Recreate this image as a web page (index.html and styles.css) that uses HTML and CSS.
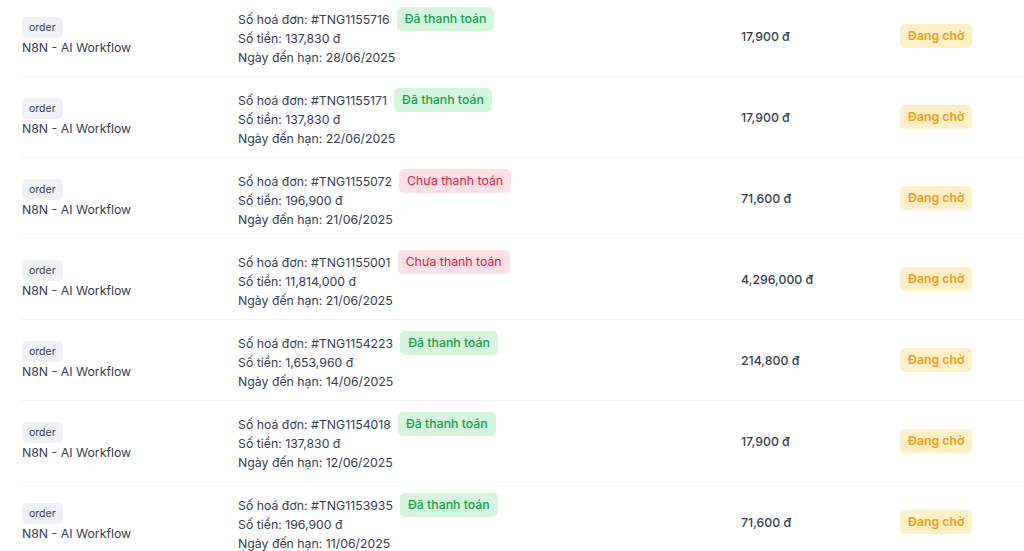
FILE: index.html
```html
<!DOCTYPE html>
<html lang="vi">
<head>
<meta charset="utf-8">
<title>Hoá đơn</title>
<link rel="stylesheet" href="styles.css">
</head>
<body>
<div class="table">
  <div class="row">
    <div class="cell product"><span class="tag">order</span><span class="name">N8N - AI Workflow</span></div>
    <div class="cell invoice">
      <div class="inv-head"><span>Số hoá đơn: #TNG1155716</span><span class="badge paid">Đã thanh toán</span></div>
      <div class="line">Số tiền: 137,830 đ</div>
      <div class="line">Ngày đến hạn: 28/06/2025</div>
    </div>
    <div class="cell amount">17,900 đ</div>
    <div class="cell status"><span class="badge pending">Đang chờ</span></div>
  </div>
  <div class="row">
    <div class="cell product"><span class="tag">order</span><span class="name">N8N - AI Workflow</span></div>
    <div class="cell invoice">
      <div class="inv-head"><span>Số hoá đơn: #TNG1155171</span><span class="badge paid">Đã thanh toán</span></div>
      <div class="line">Số tiền: 137,830 đ</div>
      <div class="line">Ngày đến hạn: 22/06/2025</div>
    </div>
    <div class="cell amount">17,900 đ</div>
    <div class="cell status"><span class="badge pending">Đang chờ</span></div>
  </div>
  <div class="row">
    <div class="cell product"><span class="tag">order</span><span class="name">N8N - AI Workflow</span></div>
    <div class="cell invoice">
      <div class="inv-head"><span>Số hoá đơn: #TNG1155072</span><span class="badge unpaid">Chưa thanh toán</span></div>
      <div class="line">Số tiền: 196,900 đ</div>
      <div class="line">Ngày đến hạn: 21/06/2025</div>
    </div>
    <div class="cell amount">71,600 đ</div>
    <div class="cell status"><span class="badge pending">Đang chờ</span></div>
  </div>
  <div class="row">
    <div class="cell product"><span class="tag">order</span><span class="name">N8N - AI Workflow</span></div>
    <div class="cell invoice">
      <div class="inv-head"><span>Số hoá đơn: #TNG1155001</span><span class="badge unpaid">Chưa thanh toán</span></div>
      <div class="line">Số tiền: 11,814,000 đ</div>
      <div class="line">Ngày đến hạn: 21/06/2025</div>
    </div>
    <div class="cell amount">4,296,000 đ</div>
    <div class="cell status"><span class="badge pending">Đang chờ</span></div>
  </div>
  <div class="row">
    <div class="cell product"><span class="tag">order</span><span class="name">N8N - AI Workflow</span></div>
    <div class="cell invoice">
      <div class="inv-head"><span>Số hoá đơn: #TNG1154223</span><span class="badge paid">Đã thanh toán</span></div>
      <div class="line">Số tiền: 1,653,960 đ</div>
      <div class="line">Ngày đến hạn: 14/06/2025</div>
    </div>
    <div class="cell amount">214,800 đ</div>
    <div class="cell status"><span class="badge pending">Đang chờ</span></div>
  </div>
  <div class="row">
    <div class="cell product"><span class="tag">order</span><span class="name">N8N - AI Workflow</span></div>
    <div class="cell invoice">
      <div class="inv-head"><span>Số hoá đơn: #TNG1154018</span><span class="badge paid">Đã thanh toán</span></div>
      <div class="line">Số tiền: 137,830 đ</div>
      <div class="line">Ngày đến hạn: 12/06/2025</div>
    </div>
    <div class="cell amount">17,900 đ</div>
    <div class="cell status"><span class="badge pending">Đang chờ</span></div>
  </div>
  <div class="row">
    <div class="cell product"><span class="tag">order</span><span class="name">N8N - AI Workflow</span></div>
    <div class="cell invoice">
      <div class="inv-head"><span>Số hoá đơn: #TNG1153935</span><span class="badge paid">Đã thanh toán</span></div>
      <div class="line">Số tiền: 196,900 đ</div>
      <div class="line">Ngày đến hạn: 11/06/2025</div>
    </div>
    <div class="cell amount">71,600 đ</div>
    <div class="cell status"><span class="badge pending">Đang chờ</span></div>
  </div>
</div>
</body>
</html>
```
FILE: styles.css
```css
html, body {
  margin: 0;
  padding: 0;
  background: #ffffff;
  overflow: hidden;
  height: 551px;
}
body {
  font-family: Inter, "Noto Sans", sans-serif;
  font-size: 12.3px;
  color: #374151;
}
.table {
  margin: -4px 0 0 22px;
  width: 1002px;
}
.row {
  display: grid;
  grid-template-columns: 216px 503px 159px 1fr;
  height: 80px;
  border-bottom: 1px solid #f1f2f4;
  align-items: center;
}
.cell.product {
  display: flex;
  flex-direction: column;
  align-items: flex-start;
  padding-top: 2px;
}
.tag {
  background: #f0f1f4;
  color: #374151;
  font-size: 10.5px;
  line-height: 21px;
  padding: 0 7px;
  border-radius: 5px;
}
.name {
  line-height: 19px;
  color: #374151;
}
.invoice {
  display: flex;
  flex-direction: column;
  padding-top: 4px;
}
.inv-head {
  display: flex;
  align-items: center;
  gap: 7px;
  height: 19px;
}
.line {
  line-height: 19px;
}
.badge {
  display: inline-block;
  line-height: 24px;
  padding: 0 8px;
  border-radius: 5px;
}
.paid {
  background: #d5f5de;
  color: #16a34a;
  font-weight: 500;
}
.unpaid {
  background: #ffe0e6;
  color: #e11d48;
}
.pending {
  background: #fdefc8;
  color: #f59e0b;
  font-weight: 600;
}
.amount {
  font-weight: 500;
  color: #374151;
}
```
